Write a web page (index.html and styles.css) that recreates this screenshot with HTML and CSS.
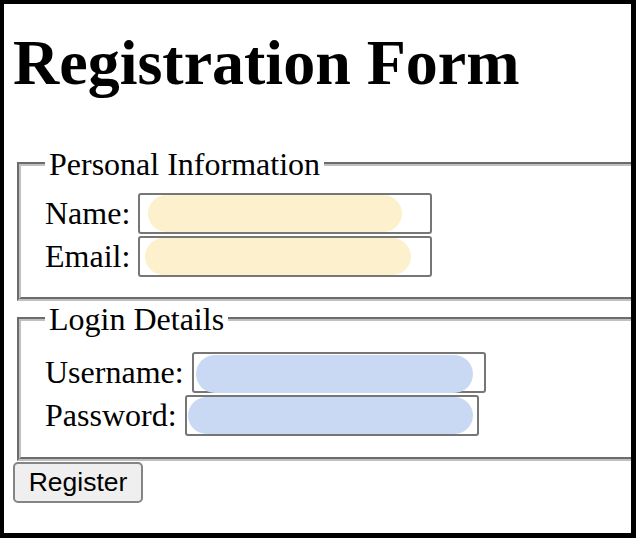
FILE: index.html
```html
<!DOCTYPE html>
<html lang="en">
<head>
    <meta charset="UTF-8">
    <meta name="viewport" content="width=device-width, initial-scale=1.0">
    <title>Registration Form</title>
    <link rel="stylesheet" href="styles.css">
</head>
<body>
    <div class="page">
        <h1>Registration Form</h1>

        <form class="register-form">
            <fieldset class="group">
                <legend>Personal Information</legend>
                <div class="row">
                    <label for="name">Name:</label>
                    <span class="field">
                        <input type="text" id="name" name="name">
                        <span class="mark yellow mark-name"></span>
                    </span>
                </div>
                <div class="row">
                    <label for="email">Email:</label>
                    <span class="field">
                        <input type="email" id="email" name="email">
                        <span class="mark yellow mark-email"></span>
                    </span>
                </div>
            </fieldset>

            <fieldset class="group login">
                <legend>Login Details</legend>
                <div class="row">
                    <label for="username">Username:</label>
                    <span class="field">
                        <input type="text" id="username" name="username">
                        <span class="mark blue mark-username"></span>
                    </span>
                </div>
                <div class="row">
                    <label for="password">Password:</label>
                    <span class="field">
                        <input type="password" id="password" name="password">
                        <span class="mark blue mark-password"></span>
                    </span>
                </div>
            </fieldset>

            <button type="submit" class="btn">Register</button>
        </form>
    </div>
</body>
</html>
```

FILE: styles.css
```css
* {
    margin: 0;
    padding: 0;
    box-sizing: border-box;
}

body {
    background-color: #000;
    font-family: 'Liberation Serif', 'Times New Roman', serif;
    font-size: 32px;
    color: #000;
}

.page {
    width: 627px;
    height: 529px;
    margin: 4px 0 0 4px;
    padding-left: 9px;
    background-color: #fff;
    overflow: hidden;
}

h1 {
    font-size: 64px;
    font-weight: bold;
    line-height: 74px;
    margin: 22px 0 46px;
}

/* Groupes du formulaire */
.group {
    border: 4px groove #c0c0c0;
    margin: 0 -60px 0 4px;
    padding: 10px 24px 19px;
}

.group.login {
    padding-top: 14px;
    padding-bottom: 20px;
}

.group legend {
    padding: 0 4px;
    line-height: 36px;
}

.row {
    display: flex;
    align-items: center;
    gap: 8px;
    height: 43px;
}

.row label {
    line-height: 36px;
    padding-bottom: 2px;
}

.field {
    position: relative;
    display: block;
    width: 294px;
    height: 41px;
}

.field input {
    display: block;
    width: 100%;
    height: 100%;
    border: 2px solid #767676;
    border-radius: 3px;
    background: #fff;
    font-family: 'Liberation Sans', Arial, sans-serif;
    font-size: 26px;
    padding: 0 4px;
}

/* Marques de surligneur sur les valeurs */
.mark {
    position: absolute;
    height: 37px;
    border-radius: 19px;
    pointer-events: none;
}

.mark.yellow {
    background-color: #fcf0cd;
}

.mark.blue {
    background-color: #c9d9f3;
}

.mark-name {
    left: 10px;
    top: 2px;
    width: 254px;
}

.mark-email {
    left: 7px;
    top: 2px;
    width: 266px;
}

.mark-username {
    left: 4px;
    top: 3px;
    width: 277px;
    height: 38px;
}

.mark-password {
    left: 3px;
    top: 2px;
    width: 285px;
}

.btn {
    display: block;
    width: 130px;
    height: 41px;
    margin-top: 1px;
    background-color: #efefef;
    border: 2px solid #858585;
    border-radius: 5px;
    font-family: 'Liberation Sans', Arial, sans-serif;
    font-size: 26.5px;
    color: #000;
    cursor: pointer;
}
```
